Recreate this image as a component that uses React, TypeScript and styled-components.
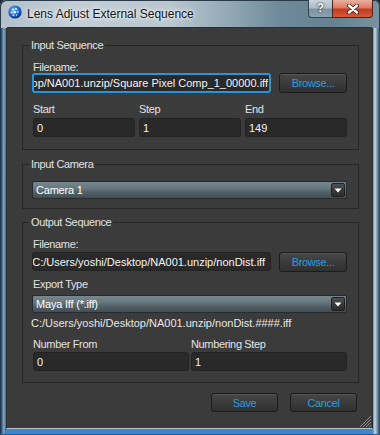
import React from "react";
import styled, { createGlobalStyle } from "styled-components";

const GlobalStyle = createGlobalStyle`
  html, body {
    margin: 0;
    padding: 0;
    background: #1a2a3a;
  }
  body {
    font-family: "Liberation Sans", Arial, sans-serif;
  }
`;

export default function App() {
  return (
    <>
      <GlobalStyle />
      <Window>
        <TitleBar>
          <AppIcon />
          <Caption>Lens Adjust External Sequence</Caption>
          <CaptionButtons>
            <HelpButton>?</HelpButton>
            <CloseButton>
              <svg width="14" height="10" viewBox="0 0 14 10">
                <path d="M3 1.5 L11 8.5 M11 1.5 L3 8.5" stroke="#3a1a14" strokeWidth="4" strokeLinecap="round" />
                <path d="M3 1.5 L11 8.5 M11 1.5 L3 8.5" stroke="#fff" strokeWidth="2.4" strokeLinecap="round" />
              </svg>
            </CloseButton>
          </CaptionButtons>
        </TitleBar>

        <Client>
          <Group $pb={12}>
            <Legend>Input Sequence</Legend>
            <Label $mt={9}>Filename:</Label>
            <PathRow>
              <Field $focus $end $h={20}>
                <span>C:/Users/yoshi/Desktop/NA001.unzip/Square Pixel Comp_1_00000.iff</span>
              </Field>
              <Button $w={68} $h={20}>Browse...</Button>
            </PathRow>
            <Columns $cols={3} $gap={4} $mt={10}>
              <Label>Start</Label>
              <Label>Step</Label>
              <Label>End</Label>
            </Columns>
            <Columns $cols={3} $gap={4} $mt={3}>
              <Field>0</Field>
              <Field>1</Field>
              <Field>149</Field>
            </Columns>
          </Group>

          <Group $pb={9} $mt={7}>
            <Legend>Input Camera</Legend>
            <Combo $mt={10}>
              Camera 1
              <ComboArrow />
            </Combo>
          </Group>

          <Group $pb={11} $mt={6}>
            <Legend>Output Sequence</Legend>
            <Label $mt={9}>Filename:</Label>
            <PathRow $mt={2}>
              <Field $end $pr={5}>
                <span>C:/Users/yoshi/Desktop/NA001.unzip/nonDist.iff</span>
              </Field>
              <Button $w={68} $h={20}>Browse...</Button>
            </PathRow>
            <Label $mt={6}>Export Type</Label>
            <Combo $mt={5}>
              Maya Iff (*.iff)
              <ComboArrow />
            </Combo>
            <PathText>C:/Users/yoshi/Desktop/NA001.unzip/nonDist.####.iff</PathText>
            <Columns $cols={2} $gap={2} $mt={9}>
              <Label>Number From</Label>
              <Label>Numbering Step</Label>
            </Columns>
            <Columns $cols={2} $gap={2} $mt={2}>
              <Field>0</Field>
              <Field>1</Field>
            </Columns>
          </Group>

          <ButtonRow>
            <Button $w={67}>Save</Button>
            <Button $w={67}>Cancel</Button>
          </ButtonRow>

          <Grip width="12" height="12" viewBox="0 0 12 12">
            <path d="M11 3 L3 11 M11 6 L6 11 M11 9 L9 11 M11 0 L0 11" stroke="#8a8a8a" strokeWidth="1" />
          </Grip>
        </Client>
      </Window>
    </>
  );
}

function AppIcon() {
  return (
    <IconSvg width="14" height="14" viewBox="0 0 14 14">
      <defs>
        <radialGradient id="ball" cx="0.4" cy="0.35" r="0.7">
          <stop offset="0" stopColor="#5fb4ff" />
          <stop offset="0.6" stopColor="#1a64c8" />
          <stop offset="1" stopColor="#0a2c6e" />
        </radialGradient>
      </defs>
      <circle cx="7" cy="7" r="6.6" fill="url(#ball)" />
      <circle cx="5" cy="4.5" r="1.1" fill="#fff" />
      <circle cx="8" cy="4" r="0.9" fill="#fff" />
      <circle cx="3.6" cy="7.4" r="1" fill="#fff" />
      <circle cx="6.6" cy="7.2" r="1.3" fill="#fff" />
      <circle cx="9.8" cy="6.8" r="0.9" fill="#e6f2ff" />
      <circle cx="5.4" cy="10.2" r="0.9" fill="#e6f2ff" />
      <circle cx="8.6" cy="10" r="0.8" fill="#cfe4ff" />
    </IconSvg>
  );
}

const ComboArrow = () => (
  <ArrowBox>
    <svg width="8" height="5" viewBox="0 0 8 5">
      <path d="M0.5 0.5 L7.5 0.5 L4 4.5 Z" fill="#fff" />
    </svg>
  </ArrowBox>
);

const Window = styled.div`
  width: 380px;
  height: 435px;
  box-sizing: border-box;
  display: flex;
  flex-direction: column;
  border-radius: 6px 6px 0 0;
  background:
    linear-gradient(90deg, #13263d 0px, #3f6588 2px, #8fb0c8 4px, #56748c 5px, transparent 7px, transparent 372px, #6f8da3 373px, #c8d8e4 375px, #7f9cb2 377px, #203852 380px),
    linear-gradient(180deg, #8ea3b0 0%, #6d8696 20%, #55708a 60%, #46709c 88%, #3d86d6 100%);
  box-shadow: inset 0 -1px 0 #1d5a9a;
`;

const TitleBar = styled.div`
  height: 28px;
  flex: none;
  display: flex;
  align-items: flex-start;
  padding-left: 8px;
  border-radius: 6px 6px 0 0;
  background: linear-gradient(90deg, #b4c1ca 0%, #c3ced6 20%, #b9c6ce 45%, #93a9b6 60%, #6e8998 74%, #66828f 88%, #7a929f 100%);
  box-shadow: inset 1px 1px 0 #2a3a48, inset -1px 0 0 #2a3a48;
`;

const IconSvg = styled.svg`
  margin-top: 5px;
  flex: none;
`;

const Caption = styled.div`
  margin: 7px 0 0 5px;
  font-size: 12px;
  line-height: 14px;
  color: #101418;
  text-shadow: 0 0 6px #fff, 0 0 3px rgba(255, 255, 255, 0.9);
`;

const CaptionButtons = styled.div`
  margin-left: auto;
  margin-right: 7px;
  display: flex;
`;

const HelpButton = styled.div`
  width: 24px;
  height: 18px;
  box-sizing: border-box;
  border: 1px solid #34444f;
  border-top: none;
  border-right: none;
  border-radius: 0 0 0 4px;
  background: linear-gradient(180deg, #c9d4dc 0%, #aebdc7 45%, #7d93a1 55%, #8ca2af 100%);
  color: #fff;
  font-size: 12px;
  font-weight: bold;
  line-height: 17px;
  text-align: center;
  text-shadow: 0 0 2px #1a2630, 0 0 1px #1a2630;
`;

const CloseButton = styled.div`
  width: 41px;
  height: 18px;
  box-sizing: border-box;
  border: 1px solid #4c241c;
  border-top: none;
  border-radius: 0 0 4px 0;
  background: linear-gradient(180deg, #eab0a0 0%, #dc7a64 45%, #c43a1e 55%, #d45a3c 100%);
  display: flex;
  align-items: center;
  justify-content: center;
`;

const Client = styled.div`
  flex: 1;
  position: relative;
  margin: 0 8px 7px 7px;
  padding: 10px 13px 0 15px;
  display: flex;
  flex-direction: column;
  background: #3b3b3b;
  box-shadow: 0 1px 0 #b8c3ca, 1px 0 0 #2a2f34, -1px 0 0 #2a2f34, 0 -1px 0 #2a2f34;
`;

const Group = styled.fieldset<{ $pb: number; $mt?: number }>`
  margin: ${p => p.$mt ?? 0}px 0 0 0;
  padding: 0 11px ${p => p.$pb}px 10px;
  border: 1px solid #262626;
  min-width: 0;
  display: flex;
  flex-direction: column;
`;

const Legend = styled.legend`
  margin-left: -4px;
  padding: 0 2px;
  font-size: 11px;
  line-height: 14px;
  letter-spacing: -0.35px;
  color: #e2e2e2;
`;

const Label = styled.div<{ $mt?: number }>`
  margin-top: ${p => p.$mt ?? 0}px;
  font-size: 11px;
  line-height: 12px;
  letter-spacing: -0.35px;
  color: #e2e2e2;
  white-space: nowrap;
`;

const PathRow = styled.div<{ $mt?: number }>`
  margin-top: ${p => p.$mt ?? 0}px;
  margin-left: -1px;
  display: flex;
  align-items: flex-start;
  gap: 8px;
`;

const Columns = styled.div<{ $cols: number; $gap: number; $mt: number }>`
  margin-top: ${p => p.$mt}px;
  display: grid;
  grid-template-columns: repeat(${p => p.$cols}, 1fr);
  column-gap: ${p => p.$gap}px;
`;

const Field = styled.div<{ $focus?: boolean; $end?: boolean; $h?: number; $pr?: number }>`
  flex: 1;
  min-width: 0;
  height: ${p => p.$h ?? 19}px;
  box-sizing: border-box;
  display: flex;
  align-items: center;
  justify-content: ${p => (p.$end ? "flex-end" : "flex-start")};
  padding: 0 ${p => p.$pr ?? 1}px 0 3px;
  overflow: hidden;
  white-space: nowrap;
  background: #292929;
  border: ${p => (p.$focus ? "2px solid #2894d9" : "1px solid #232323")};
  border-radius: 3px;
  color: #f4f4f4;
  font-size: 11px;

  span {
    flex: none;
  }
`;

const Button = styled.button<{ $w: number; $h?: number }>`
  flex: none;
  width: ${p => p.$w}px;
  height: ${p => p.$h ?? 19}px;
  box-sizing: border-box;
  padding: 0;
  border: 1px solid #1b1b1b;
  border-radius: 3px;
  background: linear-gradient(180deg, #474747 0%, #3b3b3b 50%, #303030 100%);
  box-shadow: inset 0 1px 0 rgba(255, 255, 255, 0.07);
  color: #1f9fe6;
  font-family: "Liberation Sans", Arial, sans-serif;
  font-size: 11px;
  letter-spacing: -0.35px;
`;

const Combo = styled.div<{ $mt: number }>`
  margin-top: ${p => p.$mt}px;
  margin-left: -1px;
  height: 18px;
  box-sizing: border-box;
  display: flex;
  align-items: center;
  padding: 0 1px 0 3px;
  border: 1px solid #262b2d;
  border-radius: 2px;
  background: linear-gradient(180deg, #76878e 0%, #66777e 40%, #55646a 60%, #414d52 100%);
  color: #fff;
  font-size: 11px;
  letter-spacing: -0.2px;
`;

const ArrowBox = styled.div`
  margin-left: auto;
  width: 14px;
  height: 14px;
  box-sizing: border-box;
  display: flex;
  align-items: center;
  justify-content: center;
  border: 1px solid #202020;
  border-radius: 2px;
  background: linear-gradient(180deg, #505050 0%, #3a3a3a 50%, #2c2c2c 100%);
`;

const PathText = styled.div`
  margin: 4px 0 0 -2px;
  font-size: 11px;
  line-height: 12px;
  color: #e8e8e8;
  white-space: nowrap;
`;

const ButtonRow = styled.div`
  margin: 10px 2px 0 0;
  display: flex;
  justify-content: flex-end;
  gap: 12px;
`;

const Grip = styled.svg`
  position: absolute;
  right: 0;
  bottom: 0;
`;
